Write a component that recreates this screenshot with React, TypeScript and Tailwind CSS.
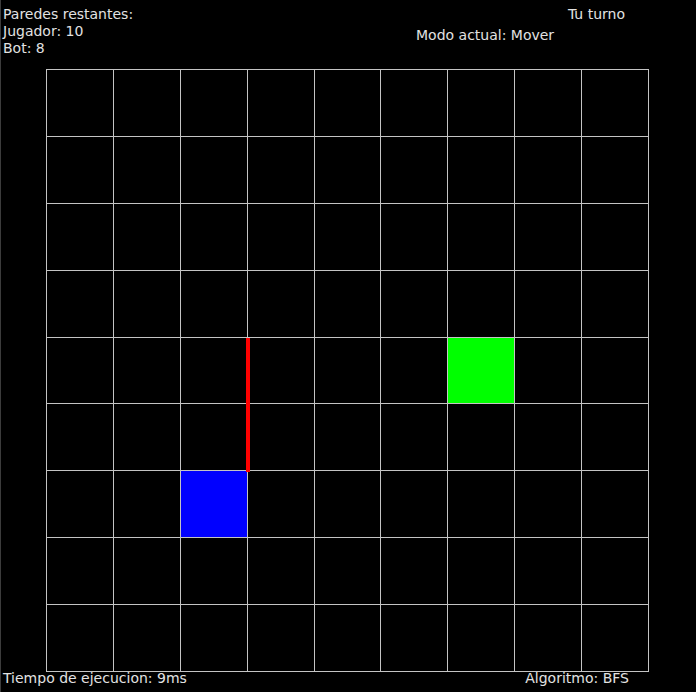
const SIZE = 9;

// piece positions on the board (row, col)
const player = { r: 6, c: 2 };
const bot = { r: 4, c: 6 };

export default function App() {
  const cells = [];
  for (let r = 0; r < SIZE; r++) {
    for (let c = 0; c < SIZE; c++) {
      let bg = "bg-black";
      if (r === player.r && c === player.c) bg = "bg-[#0000ff]";
      if (r === bot.r && c === bot.c) bg = "bg-[#00ff00]";
      cells.push(
        <div key={`${r}-${c}`} className={`${bg} border-r border-b border-[#c4c4c4]`} />
      );
    }
  }

  return (
    <div
      className="w-[696px] h-[692px] bg-black text-[#e2e2e2] text-[14px] overflow-hidden border-l border-[#3c3c3c] flex flex-col"
      style={{ fontFamily: '"DejaVu Sans", Verdana, sans-serif' }}
    >
      {/* Header */}
      <div className="h-[69px] flex">
        <div className="pl-[2px] pt-[6px] leading-[17px]">
          <p>Paredes restantes:</p>
          <p>Jugador: 10</p>
          <p>Bot: 8</p>
        </div>
        <div className="ml-auto mr-[71px] w-[209px] pt-[6px] leading-[17px]">
          <p className="text-right">Tu turno</p>
          <p className="mt-[4px]">Modo actual: Mover</p>
        </div>
      </div>

      {/* Board */}
      <div className="relative ml-[45px] w-[603px] h-[603px] border-l border-t border-[#c4c4c4] grid grid-cols-[repeat(9,66.89px)] grid-rows-[repeat(9,66.89px)]">
        {cells}
        <div className="absolute left-[198.7px] top-[267.6px] w-[4px] h-[134px] bg-[#ff0000]" />
      </div>

      {/* Footer */}
      <div className="flex leading-[16px] -mt-[2px]">
        <p className="pl-[2px]">Tiempo de ejecucion: 9ms</p>
        <p className="ml-auto mr-[67px]">Algoritmo: BFS</p>
      </div>
    </div>
  );
}
